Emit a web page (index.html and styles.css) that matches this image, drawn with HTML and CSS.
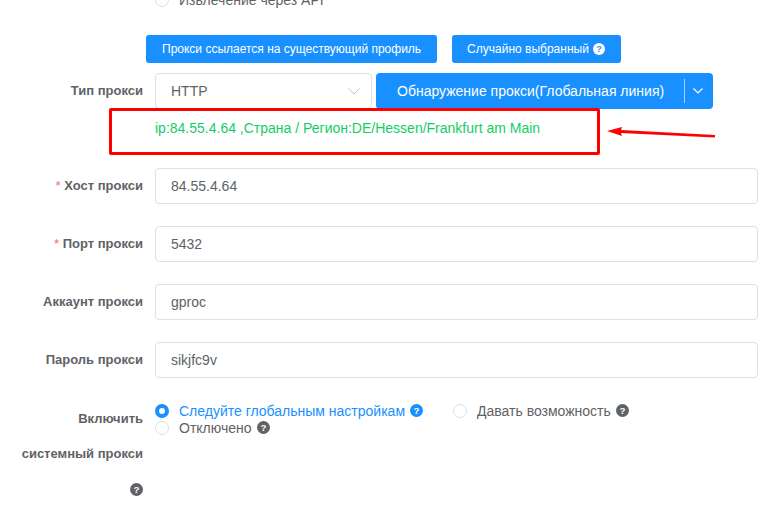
FILE: index.html
```html
<!DOCTYPE html>
<html lang="ru">
<head>
<meta charset="utf-8">
<title>Прокси</title>
<link rel="stylesheet" href="styles.css">
</head>
<body>
<main class="form">
  <div class="clip-row">
    <span class="radio"></span><span class="radio-text">Извлечение через API</span>
  </div>
  <div class="actions">
    <button class="btn small">Прокси ссылается на существующий профиль</button>
    <button class="btn small random">Случайно выбранный
      <svg class="help" viewBox="0 0 12 12"><circle cx="6" cy="6" r="6" fill="#fff"/><text x="6" y="9.2" class="q q-blue">?</text></svg>
    </button>
  </div>
  <div class="row type-row">
    <label class="label">Тип прокси</label>
    <div class="select">
      <span>HTTP</span>
      <svg class="chev" viewBox="0 0 12 7"><path d="M0.5 0.5l5.5 5.5 5.5-5.5" fill="none" stroke="#c0c4cc" stroke-width="1"/></svg>
    </div>
    <div class="detect">
      <span class="detect-main">Обнаружение прокси(Глобальная линия)</span>
      <span class="detect-sep"></span>
      <svg class="chev-w" viewBox="0 0 10 6"><path d="M0.5 0.5l4.5 4.5 4.5-4.5" fill="none" stroke="#fff" stroke-width="1.2"/></svg>
    </div>
  </div>
  <div class="result">ip:84.55.4.64 ,Страна / Регион:DE/Hessen/Frankfurt am Main</div>
  <div class="row field"><label class="label"><i class="req">*</i> Хост прокси</label><div class="input">84.55.4.64</div></div>
  <div class="row field"><label class="label"><i class="req">*</i> Порт прокси</label><div class="input">5432</div></div>
  <div class="row field"><label class="label">Аккаунт прокси</label><div class="input">gproc</div></div>
  <div class="row field"><label class="label">Пароль прокси</label><div class="input">sikjfc9v</div></div>
  <div class="row sys-row">
    <div class="label sys-label">
      <div>Включить</div>
      <div>системный прокси</div>
      <div class="sys-help"><svg class="help" viewBox="0 0 12 12"><circle cx="6" cy="6" r="6" fill="#606266"/><text x="6" y="9.2" class="q q-white">?</text></svg></div>
    </div>
    <div class="radios">
      <div class="radio-line">
        <span class="opt active"><span class="radio on"></span><span class="radio-text">Следуйте глобальным настройкам</span>
          <svg class="help" viewBox="0 0 12 12"><circle cx="6" cy="6" r="6" fill="#1890ff"/><text x="6" y="9.2" class="q q-white">?</text></svg></span>
        <span class="opt"><span class="radio"></span><span class="radio-text">Давать возможность</span>
          <svg class="help" viewBox="0 0 12 12"><circle cx="6" cy="6" r="6" fill="#606266"/><text x="6" y="9.2" class="q q-white">?</text></svg></span>
      </div>
      <div class="radio-line">
        <span class="opt"><span class="radio"></span><span class="radio-text">Отключено</span>
          <svg class="help" viewBox="0 0 12 12"><circle cx="6" cy="6" r="6" fill="#606266"/><text x="6" y="9.2" class="q q-white">?</text></svg></span>
      </div>
    </div>
  </div>
  <div class="redbox"></div>
  <svg class="arrow" viewBox="0 0 110 20"><polygon points="0,6 15,2 14,5 108,10 108,12.5 14,8 15,11" fill="#f00"/></svg>
</main>
</body>
</html>
```
FILE: styles.css
```css
* { box-sizing: border-box; }
html, body { margin: 0; padding: 0; height: 509px; overflow: hidden; background: #fff; }
body { font-family: "Liberation Sans", Arial, sans-serif; font-size: 14px; color: #606266; }
.form { position: relative; height: 509px; overflow: hidden; }
.clip-row { display: flex; align-items: center; height: 14px; margin: -7px 0 0 155px; }
.radio { display: inline-block; flex: none; width: 14px; height: 14px; border: 1px solid #dcdfe6; border-radius: 50%; background: #fff; }
.radio.on { border: 4px solid #1890ff; background: #fff; }
.radio-text { margin-left: 10px; line-height: 14px; }
.actions { display: flex; gap: 15px; margin: 28px 0 0 146px; }
.btn { display: inline-flex; align-items: center; gap: 4px; height: 28px; padding: 0 16px; border: 0; border-radius: 3px; background: #1890ff; color: #fff; font: 12px "Liberation Sans", Arial, sans-serif; }
.btn.random { padding: 0 16px 0 15px; }
.help { width: 13px; height: 13px; flex: none; }
.btn .help { width: 12px; height: 12px; }
.q { font: bold 9px "Liberation Sans", Arial, sans-serif; text-anchor: middle; }
.q-blue { fill: #1890ff; }
.q-white { fill: #fff; }
.row { display: flex; }
.label { flex: none; width: 143px; text-align: right; font-weight: bold; font-size: 13px; color: #606266; line-height: 36px; }
.req { color: #f56c6c; font-style: normal; font-weight: normal; }
.type-row { margin-top: 10px; height: 36px; }
.select { display: flex; align-items: center; justify-content: space-between; width: 217px; height: 36px; margin-left: 12px; padding: 0 11px 0 15px; border: 1px solid #dcdfe6; border-radius: 4px; }
.chev { width: 12px; height: 7px; }
.detect { display: flex; align-items: center; width: 337px; height: 36px; margin-left: 4px; padding-left: 21px; border-radius: 4px; background: #1890ff; color: #fff; font-size: 14px; }
.detect-main { flex: none; width: 287px; }
.detect-sep { width: 1px; height: 24px; background: #a3d3ff; }
.chev-w { width: 10px; height: 6px; margin-left: 8px; }
.result { height: 59px; padding: 10px 0 0 155px; line-height: 18px; color: #13ce66; font-size: 14px; }
.field { height: 36px; margin-bottom: 22px; }
.input { width: 603px; height: 36px; margin-left: 12px; padding: 0 15px; border: 1px solid #dcdfe6; border-radius: 4px; line-height: 34px; }
.sys-label { line-height: 35px; margin-top: 1px; }
.sys-help { display: flex; justify-content: flex-end; align-items: center; height: 36px; }
.radios { margin: 2px 0 0 12px; }
.radio-line { display: flex; height: 17px; align-items: center; gap: 30px; }
.opt { display: inline-flex; align-items: center; }
.opt .help { margin-left: 5px; }
.opt.active .radio-text { color: #1890ff; }
.redbox { position: absolute; left: 109px; top: 108px; width: 491px; height: 47px; border: 3px solid #f00; border-radius: 2px; }
.arrow { position: absolute; left: 607px; top: 125px; width: 110px; height: 20px; }
```
